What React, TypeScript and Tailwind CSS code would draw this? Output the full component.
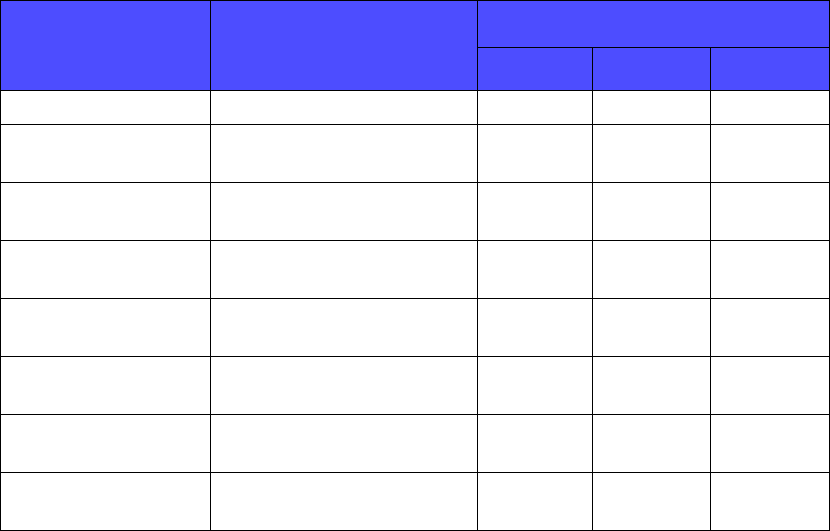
const rows = Array.from({ length: 8 }, (_, i) => i);

export default function App() {
  return (
    <div className="w-[830px] h-[531px] bg-white">
      <div className="grid grid-cols-[209px_266px_114px_117px_118px] grid-rows-[46px_42px_33px_repeat(7,57px)] gap-px p-px bg-black w-[830px] h-[531px]">
        <div className="row-span-2 bg-[#4d4dff]" />
        <div className="row-span-2 bg-[#4d4dff]" />
        <div className="col-span-3 bg-[#4d4dff]" />
        <div className="bg-[#4d4dff]" />
        <div className="bg-[#4d4dff]" />
        <div className="bg-[#4d4dff]" />
        {rows.map((r) => (
          <div key={r} className="contents">
            <div className="bg-white" />
            <div className="bg-white" />
            <div className="bg-white" />
            <div className="bg-white" />
            <div className="bg-white" />
          </div>
        ))}
      </div>
    </div>
  );
}
